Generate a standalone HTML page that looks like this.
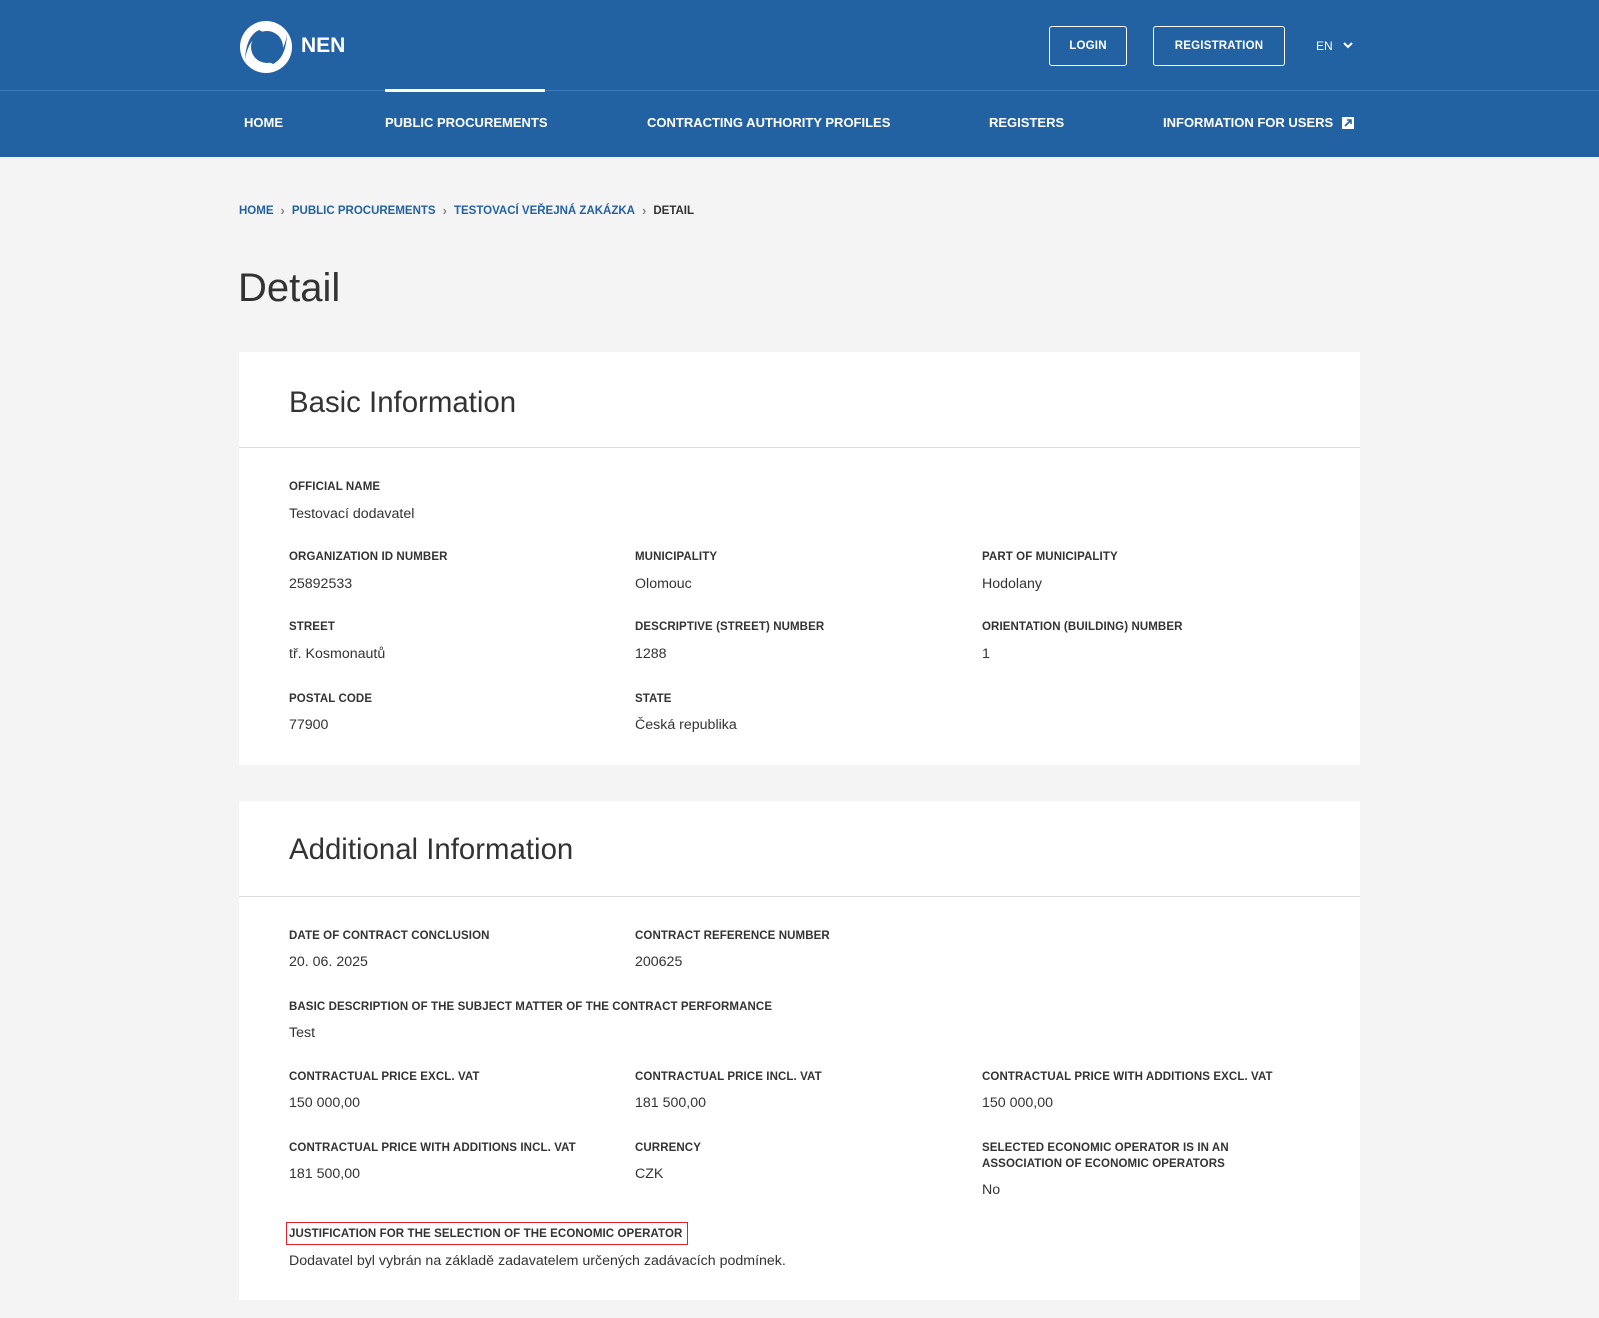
<!DOCTYPE html>
<html><head><meta charset="utf-8"><style>
*{margin:0;padding:0;box-sizing:border-box}
body{width:1599px;height:1318px;background:#f4f4f4;font-family:"Liberation Sans",Arial,sans-serif;position:relative;overflow:hidden;color:#333}
.hdr{position:absolute;left:0;top:0;width:1599px;height:157px;background:#2362a2}
.hline{position:absolute;left:0;top:90px;width:1599px;height:1px;background:#3d7cbc}
.a{position:absolute;white-space:nowrap}
.nav{font-size:13px;font-weight:bold;color:#fff;top:115px;line-height:16px}
.btn{position:absolute;top:26px;height:40px;border:1px solid #fff;border-radius:3px;color:#fff;font-size:11.5px;font-weight:bold;display:flex;align-items:center;justify-content:center;letter-spacing:.2px}
.bcw{position:absolute;left:239px;top:204px;display:flex;align-items:center;font-size:11.5px;font-weight:bold;line-height:14px;white-space:nowrap}
.bcw a{color:#2362a2;text-decoration:none}
.bcw .s{color:#888;margin:0 7px;font-size:13px}
.card{position:absolute;left:239px;width:1121px;background:#fff}
.card .ln{position:absolute;left:0;right:0;height:1px;background:#dcdcdc}
.ct{position:absolute;left:50px;font-size:29.4px;color:#333;line-height:34px}
.l{position:absolute;font-size:11.5px;font-weight:bold;color:#333;letter-spacing:.1px;line-height:16px}
.v{position:absolute;font-size:14.2px;color:#333;line-height:18px}
</style></head><body>
<div class="hdr"></div>
<div class="hline"></div>
<svg class="a" style="left:239px;top:20px" width="54" height="54" viewBox="0 0 54 54">
<circle cx="27" cy="27" r="26" fill="#fff"/>
<circle cx="28" cy="27" r="16" fill="#2362a2"/>
<path d="M6 40 C8 26 14 17 24 12 L20 10 C12 14 7 22 6 40Z" fill="#2362a2"/>
<path d="M48 14 C46 28 40 37 30 42 L34 44 C42 40 47 32 48 14Z" fill="#2362a2"/>
</svg>
<div class="a" style="left:301px;top:33px;font-size:21px;font-weight:bold;color:#fff;line-height:26px">NEN</div>
<div class="btn" style="left:1049px;width:78px">LOGIN</div>
<div class="btn" style="left:1153px;width:132px">REGISTRATION</div>
<div class="a" style="left:1316px;top:39px;font-size:12px;color:#fff;line-height:14px">EN</div>
<svg class="a" style="left:1342px;top:40px" width="12" height="10" viewBox="0 0 12 10"><path d="M2 3l4 4 4-4" stroke="#fff" stroke-width="2" fill="none"/></svg>
<div class="a nav" style="left:244px">HOME</div>
<div class="a" style="left:385px;top:89px;width:160px;height:3px;background:#fff"></div>
<div class="a nav" style="left:385px">PUBLIC PROCUREMENTS</div>
<div class="a nav" style="left:647px">CONTRACTING AUTHORITY PROFILES</div>
<div class="a nav" style="left:989px">REGISTERS</div>
<div class="a nav" style="left:1163px;display:flex;align-items:center;gap:9px">INFORMATION FOR USERS<svg width="12" height="12" viewBox="0 0 12 12"><rect width="12" height="12" fill="#fff"/><path d="M3 9L8.5 3.5M5 3H9V7" stroke="#2362a2" stroke-width="1.6" fill="none"/></svg></div>

<div class="bcw"><a>HOME</a><span class="s">›</span><a>PUBLIC PROCUREMENTS</a><span class="s">›</span><a>TESTOVACÍ VEŘEJNÁ ZAKÁZKA</a><span class="s">›</span><span>DETAIL</span></div>
<div class="a" style="left:238px;top:265px;font-size:40px;color:#333;line-height:46px">Detail</div>

<div class="card" style="top:352px;height:413px">
<div class="ct" style="top:34px">Basic Information</div>
<div class="ln" style="top:95px"></div>
</div>
<div class="card" style="top:801px;height:499px">
<div class="ct" style="top:32px">Additional Information</div>
<div class="ln" style="top:95px"></div>
</div>

<div class="l a" style="left:289px;top:479px">OFFICIAL NAME</div>
<div class="v a" style="left:289px;top:505px">Testovací dodavatel</div>

<div class="l a" style="left:289px;top:549px">ORGANIZATION ID NUMBER</div>
<div class="v a" style="left:289px;top:575px">25892533</div>
<div class="l a" style="left:635px;top:549px">MUNICIPALITY</div>
<div class="v a" style="left:635px;top:575px">Olomouc</div>
<div class="l a" style="left:982px;top:549px">PART OF MUNICIPALITY</div>
<div class="v a" style="left:982px;top:575px">Hodolany</div>

<div class="l a" style="left:289px;top:619px">STREET</div>
<div class="v a" style="left:289px;top:645px">tř. Kosmonautů</div>
<div class="l a" style="left:635px;top:619px">DESCRIPTIVE (STREET) NUMBER</div>
<div class="v a" style="left:635px;top:645px">1288</div>
<div class="l a" style="left:982px;top:619px">ORIENTATION (BUILDING) NUMBER</div>
<div class="v a" style="left:982px;top:645px">1</div>

<div class="l a" style="left:289px;top:691px">POSTAL CODE</div>
<div class="v a" style="left:289px;top:716px">77900</div>
<div class="l a" style="left:635px;top:691px">STATE</div>
<div class="v a" style="left:635px;top:716px">Česká republika</div>

<div class="l a" style="left:289px;top:928px">DATE OF CONTRACT CONCLUSION</div>
<div class="v a" style="left:289px;top:953px">20. 06. 2025</div>
<div class="l a" style="left:635px;top:928px">CONTRACT REFERENCE NUMBER</div>
<div class="v a" style="left:635px;top:953px">200625</div>

<div class="l a" style="left:289px;top:999px">BASIC DESCRIPTION OF THE SUBJECT MATTER OF THE CONTRACT PERFORMANCE</div>
<div class="v a" style="left:289px;top:1024px">Test</div>

<div class="l a" style="left:289px;top:1069px">CONTRACTUAL PRICE EXCL. VAT</div>
<div class="v a" style="left:289px;top:1094px">150 000,00</div>
<div class="l a" style="left:635px;top:1069px">CONTRACTUAL PRICE INCL. VAT</div>
<div class="v a" style="left:635px;top:1094px">181 500,00</div>
<div class="l a" style="left:982px;top:1069px">CONTRACTUAL PRICE WITH ADDITIONS EXCL. VAT</div>
<div class="v a" style="left:982px;top:1094px">150 000,00</div>

<div class="l a" style="left:289px;top:1140px">CONTRACTUAL PRICE WITH ADDITIONS INCL. VAT</div>
<div class="v a" style="left:289px;top:1165px">181 500,00</div>
<div class="l a" style="left:635px;top:1140px">CURRENCY</div>
<div class="v a" style="left:635px;top:1165px">CZK</div>
<div class="l a" style="left:982px;top:1140px">SELECTED ECONOMIC OPERATOR IS IN AN<br>ASSOCIATION OF ECONOMIC OPERATORS</div>
<div class="v a" style="left:982px;top:1181px">No</div>

<div class="a" style="left:286px;top:1222px;width:402px;height:23px;border:1px solid #e5202a"></div>
<div class="l a" style="left:289px;top:1226px">JUSTIFICATION FOR THE SELECTION OF THE ECONOMIC OPERATOR</div>
<div class="v a" style="left:289px;top:1252px">Dodavatel byl vybrán na základě zadavatelem určených zadávacích podmínek.</div>
</body></html>
